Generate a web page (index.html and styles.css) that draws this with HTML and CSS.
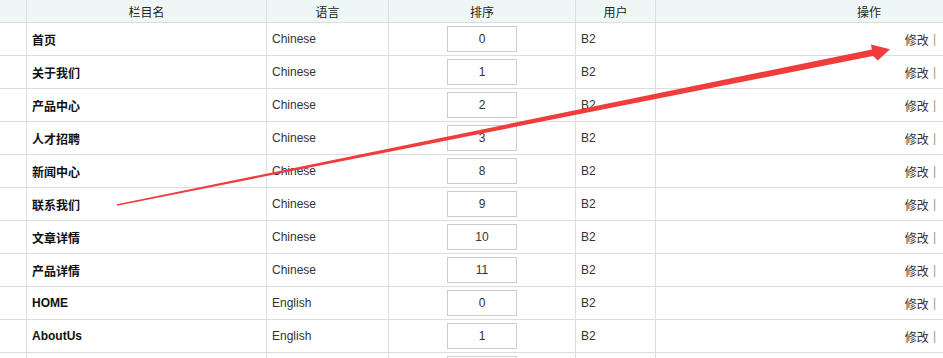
FILE: index.html
```html
<!DOCTYPE html>
<html lang="zh-CN">
<head>
	<meta charset="UTF-8">
	<title>栏目管理</title>
	<link rel="stylesheet" href="styles.css">
</head>
<body>

<!-- 栏目列表 -->
	<div class="column-list">

		<div class="list-row list-head">
			<div class="cell"></div>
			<div class="cell">栏目名</div>
			<div class="cell">语言</div>
			<div class="cell">排序</div>
			<div class="cell">用户</div>
			<div class="cell">操作</div>
		</div>

		<div class="list-row">
			<div class="cell"></div>
			<div class="cell name">首页</div>
			<div class="cell">Chinese</div>
			<div class="cell sort"><input type="text" class="sort-input" value="0"></div>
			<div class="cell">B2</div>
			<div class="cell ops"><a href="javascript:;">修改</a><i>|</i></div>
		</div>

		<div class="list-row">
			<div class="cell"></div>
			<div class="cell name">关于我们</div>
			<div class="cell">Chinese</div>
			<div class="cell sort"><input type="text" class="sort-input" value="1"></div>
			<div class="cell">B2</div>
			<div class="cell ops"><a href="javascript:;">修改</a><i>|</i></div>
		</div>

		<div class="list-row">
			<div class="cell"></div>
			<div class="cell name">产品中心</div>
			<div class="cell">Chinese</div>
			<div class="cell sort"><input type="text" class="sort-input" value="2"></div>
			<div class="cell">B2</div>
			<div class="cell ops"><a href="javascript:;">修改</a><i>|</i></div>
		</div>

		<div class="list-row">
			<div class="cell"></div>
			<div class="cell name">人才招聘</div>
			<div class="cell">Chinese</div>
			<div class="cell sort"><input type="text" class="sort-input" value="3"></div>
			<div class="cell">B2</div>
			<div class="cell ops"><a href="javascript:;">修改</a><i>|</i></div>
		</div>

		<div class="list-row">
			<div class="cell"></div>
			<div class="cell name">新闻中心</div>
			<div class="cell">Chinese</div>
			<div class="cell sort"><input type="text" class="sort-input" value="8"></div>
			<div class="cell">B2</div>
			<div class="cell ops"><a href="javascript:;">修改</a><i>|</i></div>
		</div>

		<div class="list-row">
			<div class="cell"></div>
			<div class="cell name">联系我们</div>
			<div class="cell">Chinese</div>
			<div class="cell sort"><input type="text" class="sort-input" value="9"></div>
			<div class="cell">B2</div>
			<div class="cell ops"><a href="javascript:;">修改</a><i>|</i></div>
		</div>

		<div class="list-row">
			<div class="cell"></div>
			<div class="cell name">文章详情</div>
			<div class="cell">Chinese</div>
			<div class="cell sort"><input type="text" class="sort-input" value="10"></div>
			<div class="cell">B2</div>
			<div class="cell ops"><a href="javascript:;">修改</a><i>|</i></div>
		</div>

		<div class="list-row">
			<div class="cell"></div>
			<div class="cell name">产品详情</div>
			<div class="cell">Chinese</div>
			<div class="cell sort"><input type="text" class="sort-input" value="11"></div>
			<div class="cell">B2</div>
			<div class="cell ops"><a href="javascript:;">修改</a><i>|</i></div>
		</div>

		<div class="list-row">
			<div class="cell"></div>
			<div class="cell name">HOME</div>
			<div class="cell">English</div>
			<div class="cell sort"><input type="text" class="sort-input" value="0"></div>
			<div class="cell">B2</div>
			<div class="cell ops"><a href="javascript:;">修改</a><i>|</i></div>
		</div>

		<div class="list-row">
			<div class="cell"></div>
			<div class="cell name">AboutUs</div>
			<div class="cell">English</div>
			<div class="cell sort"><input type="text" class="sort-input" value="1"></div>
			<div class="cell">B2</div>
			<div class="cell ops"><a href="javascript:;">修改</a><i>|</i></div>
		</div>

		<!-- 下一行只露出排序框的上边 -->
		<div class="list-row">
			<div class="cell"></div>
			<div class="cell"></div>
			<div class="cell"></div>
			<div class="cell sort"><input type="text" class="sort-input" value=""></div>
			<div class="cell"></div>
			<div class="cell"></div>
		</div>

		<!-- 红色箭头，指向"修改" -->
		<svg class="pointer" width="943" height="358" viewBox="0 0 943 358">
			<polygon fill="#f03c3c" points="116.9,204.3 871.8,49.4 871,44.6 890,49.2 877.8,60.5 873,56 117.1,205.7"/>
		</svg>

	</div>

</body>
</html>
```

FILE: styles.css
```css
html,
body {
    margin: 0px;
    padding: 0px;
    overflow: hidden;
    background: #ffffff;
}

body {
    font-family: "Liberation Sans", "Noto Sans CJK SC", sans-serif;
    font-size: 12px;
    color: #333333;
}

.column-list {
    position: relative;
    width: 1082px;
}

.list-row {
    display: grid;
    grid-template-columns: 27px 240px 122px 187px 80px 426px;
    height: 33px;
    border-bottom: #dddddd solid 1px;
    box-sizing: border-box;
}

.list-row .cell {
    display: flex;
    align-items: center;
    padding-left: 5px;
    border-right: #dddddd solid 1px;
    box-sizing: border-box;
    white-space: nowrap;
    overflow: hidden;
}

.list-row .cell:last-child {
    border-right: none;
}

.list-head {
    height: 23px;
    background: #eff7f6;
}

.list-head .cell {
    justify-content: center;
    padding-left: 0px;
    color: #222222;
}

.list-row .name {
    font-weight: bold;
    color: #111111;
}

.list-row .sort {
    justify-content: center;
    padding-left: 0px;
}

.sort-input {
    width: 70px;
    height: 26px;
    box-sizing: border-box;
    border: #cccccc solid 1px;
    padding: 0px;
    margin: 0px;
    text-align: center;
    font-family: "Liberation Sans", sans-serif;
    font-size: 12px;
    color: #333333;
    background: #ffffff;
}

/* 操作列右对齐，只显示到屏幕右边 */
.list-row .ops {
    padding-left: 0px;
    padding-right: 146px;
    justify-content: flex-end;
}

.ops a {
    text-decoration: none;
    color: #333333;
}

.ops i {
    font-style: normal;
    color: #9c9a80;
    margin-left: 4px;
}

.pointer {
    position: absolute;
    left: 0px;
    top: 0px;
    pointer-events: none;
}
```
